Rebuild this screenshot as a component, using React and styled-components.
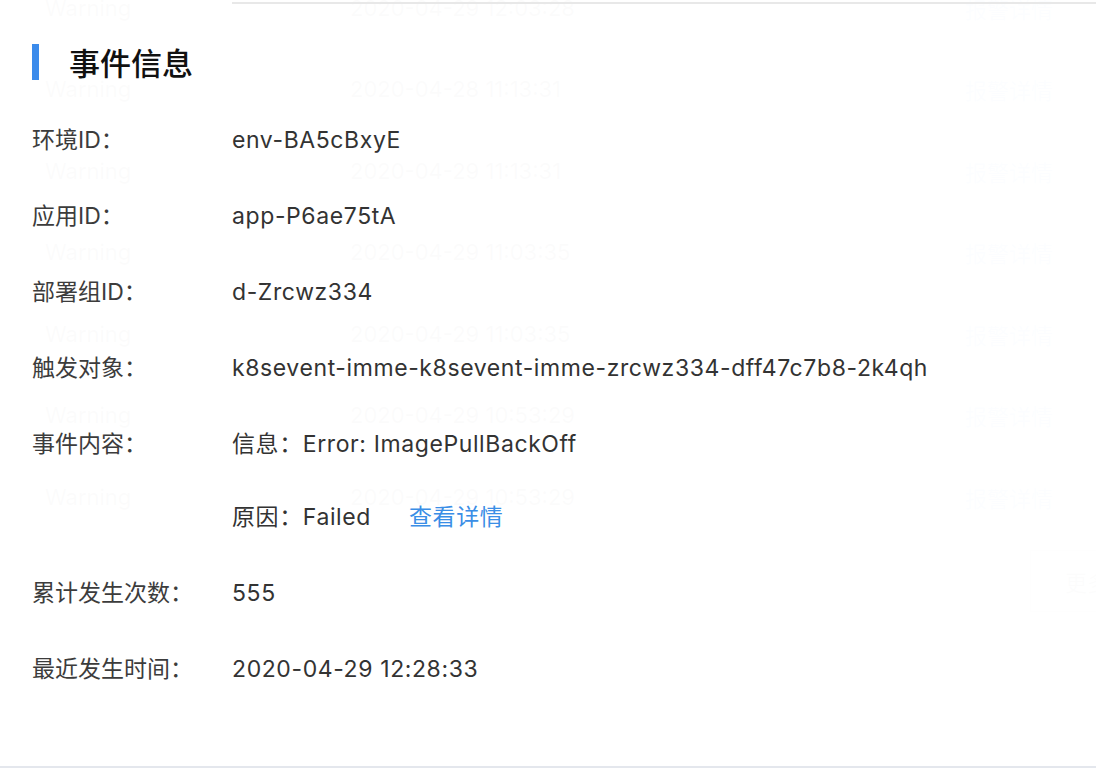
import React from "react";
import styled, { createGlobalStyle } from "styled-components";

const GlobalStyle = createGlobalStyle`
    html, body {
        margin: 0;
        padding: 0;
        background: #fff;
    }
    body {
        font-family: Inter, "Noto Sans CJK SC", sans-serif;
        color: #333;
    }
`;

const ghostRows = [
    "2020-04-29 12:03:28",
    "2020-04-28 11:13:31",
    "2020-04-29 11:13:31",
    "2020-04-29 11:03:35",
    "2020-04-29 11:03:35",
    "2020-04-29 10:53:29",
    "2020-04-29 10:53:29",
];

const fields = [
    { label: "环境ID：", value: "env-BA5cBxyE" },
    { label: "应用ID：", value: "app-P6ae75tA" },
    { label: "部署组ID：", value: "d-Zrcwz334" },
    {
        label: "触发对象：",
        value: "k8sevent-imme-k8sevent-imme-zrcwz334-dff47c7b8-2k4qh",
    },
];

export default function App() {
    return (
        <Page>
            <GlobalStyle />

            {/* table underneath the drawer */}
            <GhostTable>
                {ghostRows.map((time, i) => (
                    <GhostRow key={i}>
                        <GhostCell>Warning</GhostCell>
                        <GhostCell>{time}</GhostCell>
                        <GhostLink>报警详情</GhostLink>
                    </GhostRow>
                ))}
                <GhostFooter>
                    <GhostButton>更多</GhostButton>
                </GhostFooter>
            </GhostTable>

            <Panel>
                <TopRule />
                <Header>
                    <Bar />
                    <Title>事件信息</Title>
                </Header>

                {fields.map((f) => (
                    <Row key={f.label}>
                        <Label>{f.label}</Label>
                        <Value>{f.value}</Value>
                    </Row>
                ))}

                <Row>
                    <Label>事件内容：</Label>
                    <Value>
                        <Line>信息：Error: ImagePullBackOff</Line>
                        <Line $gap>
                            原因：Failed
                            <Link href="#">查看详情</Link>
                        </Line>
                    </Value>
                </Row>

                <Row>
                    <Label>累计发生次数：</Label>
                    <Value>555</Value>
                </Row>
                <Row>
                    <Label>最近发生时间：</Label>
                    <Value>2020-04-29 12:28:33</Value>
                </Row>
            </Panel>
        </Page>
    );
}

const Page = styled.div`
    position: relative;
    width: 1096px;
    height: 772px;
    overflow: hidden;
    background: #fff;
`;

const GhostTable = styled.div`
    margin-top: -33px;
    font-size: 22px;
    color: #333;
`;

const GhostRow = styled.div`
    display: grid;
    grid-template-columns: 305px 615px 1fr;
    align-items: center;
    height: 81.5px;
    padding-left: 45px;
`;

const GhostCell = styled.span`
    white-space: nowrap;
`;

const GhostLink = styled.span`
    color: #3a8ee6;
`;

const GhostFooter = styled.div`
    display: flex;
    justify-content: flex-end;
    margin-top: 12px;
    margin-right: -48px;
`;

const GhostButton = styled.div`
    border: 1px solid #bbb;
    padding: 14px 34px;
    font-size: 22px;
    color: #666;
`;

const Panel = styled.div`
    position: absolute;
    inset: 0;
    background: rgba(255, 255, 255, 0.985);
    padding-top: 2px;
    padding-left: 32px;
    border-bottom: 2px solid #e4e7ed;
    box-sizing: border-box;
    height: 768px;
`;

const TopRule = styled.div`
    height: 2px;
    margin-left: 200px;
    margin-right: -32px;
    background: #e8e8e8;
`;

const Header = styled.div`
    display: flex;
    align-items: center;
    margin-top: 35px;
    margin-bottom: 18px;
`;

const Bar = styled.div`
    width: 7px;
    height: 36px;
    background: #3b8beb;
    margin-right: 30px;
`;

const Title = styled.h2`
    margin: 0;
    font-size: 31px;
    font-weight: 500;
    color: #111;
    font-family: "Noto Sans CJK SC", sans-serif;
`;

const Row = styled.div`
    display: grid;
    grid-template-columns: 200px 1fr;
    align-items: start;
    padding: 22px 0;
    font-size: 23px;
    line-height: 32px;
`;

const Label = styled.div`
    color: #3c3c3c;
    white-space: nowrap;
`;

const Value = styled.div`
    color: #333;
    letter-spacing: 0.6px;
`;

const Line = styled.div`
    display: flex;
    align-items: center;
    margin-top: ${(p) => (p.$gap ? "41px" : "0")};
`;

const Link = styled.a`
    color: #3a8ee6;
    text-decoration: none;
    margin-left: 38px;
`;
